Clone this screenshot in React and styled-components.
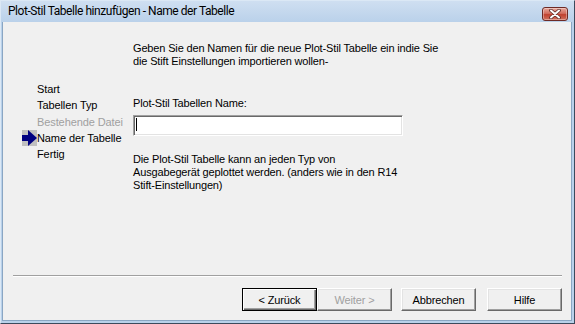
import React from "react";
import styled, { createGlobalStyle } from "styled-components";

const GlobalStyle = createGlobalStyle`
  html, body {
    margin: 0;
    padding: 0;
    background: #ffffff;
  }
  * {
    box-sizing: border-box;
  }
`;

const Window = styled.div`
  width: 575px;
  height: 324px;
  display: flex;
  flex-direction: column;
  background: #b9d1ea;
  border-left: 1px solid #dbe8f5;
  border-top: 1px solid #dbe8f5;
  border-right: 1px solid #3b4a5c;
  border-bottom: 1px solid #3b4a5c;
  padding: 0 2px 2px 1px;
`;

const TitleBar = styled.div`
  height: 21px;
  flex-shrink: 0;
  display: flex;
  align-items: center;
  justify-content: space-between;
  margin: 0 -2px 0 -1px;
  padding: 0 6px 0 7px;
  background: linear-gradient(#cfdff1, #bad1ea);
`;

const TitleText = styled.div`
  font-family: Roboto, "Liberation Sans", Arial, sans-serif;
  font-size: 12px;
  letter-spacing: -0.45px;
  color: #000000;
  padding-bottom: 1px;
`;

const CloseButton = styled.div`
  width: 26px;
  height: 14px;
  margin-top: 4px;
  border-radius: 3px;
  border: 1px solid #6d2a25;
  background: linear-gradient(#e8a79b 0%, #d26d5e 45%, #c0412f 55%, #d0705d 100%);
  box-shadow: inset 0 0 0 1px rgba(255, 255, 255, 0.35);
  display: flex;
  align-items: center;
  justify-content: center;
`;

const Client = styled.div`
  flex: 1;
  display: flex;
  flex-direction: column;
  background: #f0f0f0;
  border: 1px solid #8aa6c3;
  border-top: none;
`;

const Body = styled.div`
  flex: 1;
  display: grid;
  grid-template-columns: 130px 1fr;
`;

const Nav = styled.div`
  padding: 59px 0 0 19px;
  display: flex;
  flex-direction: column;
`;

const NavItem = styled.div`
  display: flex;
  align-items: center;
  height: 16.25px;
  font-family: "Liberation Sans", Arial, sans-serif;
  font-size: 11px;
  letter-spacing: -0.1px;
  color: ${(props) => (props.disabled ? "#a0a0a0" : "#000000")};
  white-space: nowrap;
`;

const Marker = styled.div`
  width: 15px;
  height: 16px;
  flex-shrink: 0;
  display: flex;
`;

const Content = styled.div`
  padding-top: 20px;
  display: flex;
  flex-direction: column;
  font-family: "Liberation Sans", Arial, sans-serif;
  font-size: 11px;
  letter-spacing: -0.15px;
  color: #000000;
`;

const Paragraph = styled.div`
  line-height: 13px;
  margin-top: ${(props) => props.top || 0}px;
`;

const NameField = styled.div`
  width: 270px;
  height: 21px;
  margin-top: 5px;
  background: #ffffff;
  border: 1px solid;
  border-color: #a0a0a0 #ffffff #ffffff #a0a0a0;
  box-shadow: inset 1px 1px 0 #696969, inset -1px -1px 0 #e3e3e3;
  padding: 2px 0 0 2px;
`;

const Caret = styled.div`
  width: 1px;
  height: 13px;
  background: #000000;
`;

const Separator = styled.div`
  height: 2px;
  margin: 0 9px 0 10px;
  border-top: 1px solid #a0a0a0;
  border-bottom: 1px solid #ffffff;
`;

const ButtonRow = styled.div`
  display: flex;
  justify-content: flex-end;
  padding: 11px 9px 9px 0;
`;

const Button = styled.div`
  width: 75px;
  height: 23px;
  margin-left: ${(props) => props.gap || 0}px;
  display: flex;
  align-items: center;
  justify-content: center;
  font-family: "Liberation Sans", Arial, sans-serif;
  font-size: 11px;
  letter-spacing: -0.15px;
  color: ${(props) => (props.disabled ? "#a0a0a0" : "#000000")};
  background: #f0f0f0;
  border: 1px solid;
  border-color: ${(props) =>
    props.primary ? "#000000" : "#ffffff #696969 #696969 #ffffff"};
  box-shadow: ${(props) =>
    props.primary
      ? "inset 1px 1px 0 #ffffff, inset -1px -1px 0 #696969, inset -2px -2px 0 #a0a0a0"
      : "inset -1px -1px 0 #a0a0a0, inset 1px 1px 0 #e3e3e3"};
`;

const steps = [
  { label: "Start" },
  { label: "Tabellen Typ" },
  { label: "Bestehende Datei", disabled: true },
  { label: "Name der Tabelle", current: true },
  { label: "Fertig" },
];

const CloseIcon = () => (
  <svg width="12" height="10" viewBox="0 0 12 10">
    <path
      d="M2 1.5 L10 8.5 M10 1.5 L2 8.5"
      stroke="#5a2a26"
      strokeWidth="3.6"
      strokeLinecap="round"
    />
    <path
      d="M2 1.5 L10 8.5 M10 1.5 L2 8.5"
      stroke="#ffffff"
      strokeWidth="2"
      strokeLinecap="round"
    />
  </svg>
);

const CurrentArrow = () => (
  <svg width="15" height="16" viewBox="0 0 15 16">
    <rect x="0" y="0" width="15" height="16" fill="#c0c0c0" />
    <rect x="0" y="5" width="7" height="6" fill="#000080" />
    <polygon points="6,0 15,8 6,16" fill="#000080" />
  </svg>
);

const App = () => {
  return (
    <>
      <GlobalStyle />
      <Window>
        <TitleBar>
          <TitleText>Plot-Stil Tabelle hinzufügen - Name der Tabelle</TitleText>
          <CloseButton>
            <CloseIcon />
          </CloseButton>
        </TitleBar>
        <Client>
          <Body>
            <Nav>
              {steps.map((step) => (
                <NavItem key={step.label} disabled={step.disabled}>
                  <Marker>{step.current && <CurrentArrow />}</Marker>
                  {step.label}
                </NavItem>
              ))}
            </Nav>
            <Content>
              <Paragraph>
                Geben Sie den Namen für die neue Plot-Stil Tabelle ein indie Sie
                <br />
                die Stift Einstellungen importieren wollen-
              </Paragraph>
              <Paragraph top={29}>Plot-Stil Tabellen Name:</Paragraph>
              <NameField>
                <Caret />
              </NameField>
              <Paragraph top={17}>
                Die Plot-Stil Tabelle kann an jeden Typ von
                <br />
                Ausgabegerät geplottet werden. (anders wie in den R14
                <br />
                Stift-Einstellungen)
              </Paragraph>
            </Content>
          </Body>
          <Separator />
          <ButtonRow>
            <Button primary>&lt; Zurück</Button>
            <Button disabled>Weiter &gt;</Button>
            <Button gap={9}>Abbrechen</Button>
            <Button gap={11}>Hilfe</Button>
          </ButtonRow>
        </Client>
      </Window>
    </>
  );
};

export default App;
